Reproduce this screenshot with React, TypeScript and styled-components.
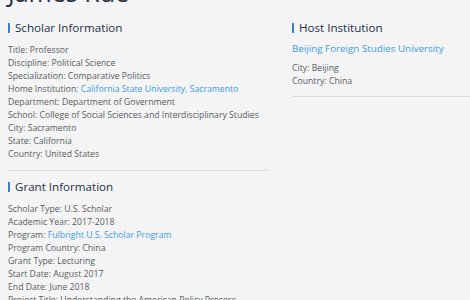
import React from "react";
import styled, { createGlobalStyle } from "styled-components";

const Global = createGlobalStyle`
  html, body { margin: 0; padding: 0; background: #f4f4f4; }
  body { font-family: "Open Sans", "Noto Sans", sans-serif; }
`;

const Page = styled.div`
  padding: 0 8px;
  overflow: hidden;
  height: 300px;
`;

const Name = styled.h1`
  margin: -23px 0 0 0;
  font-size: 25px;
  line-height: 30px;
  font-weight: 500;
  color: #243044;
`;

const Columns = styled.div`
  display: grid;
  grid-template-columns: 262px 200px;
  column-gap: 22px;
  margin-top: 13px;
`;

const Column = styled.div`
  display: flex;
  flex-direction: column;
`;

const Section = styled.section<{ $divider?: boolean; $pad?: number }>`
  padding-bottom: ${(p) => p.$pad ?? 9}px;
  border-bottom: ${(p) => (p.$divider ? "1px solid #dcdcdc" : "none")};
  margin-bottom: 8px;
`;

const Heading = styled.h2`
  display: flex;
  align-items: center;
  gap: 5px;
  margin: 0 0 8px 0;
  font-size: 11.6px;
  line-height: 16px;
  font-weight: 500;
  color: #243044;
  &::before {
    content: "";
    width: 2px;
    height: 10px;
    background: #3a7fd6;
  }
`;

const Row = styled.div`
  font-size: 8.7px;
  line-height: 13px;
  color: #585c61;
`;

const Link = styled.a`
  color: #3d9be0;
  text-decoration: none;
`;

const HostName = styled(Link)`
  display: block;
  font-size: 9.8px;
  line-height: 14px;
  margin: -2px 0 6px;
`;

type Item = [string, string, boolean?];

const scholar: Item[] = [
  ["Title", "Professor"],
  ["Discipline", "Political Science"],
  ["Specialization", "Comparative Politics"],
  ["Home Institution", "California State University, Sacramento", true],
  ["Department", "Department of Government"],
  ["School", "College of Social Sciences and Interdisciplinary Studies"],
  ["City", "Sacramento"],
  ["State", "California"],
  ["Country", "United States"],
];

const grant: Item[] = [
  ["Scholar Type", "U.S. Scholar"],
  ["Academic Year", "2017-2018"],
  ["Program", "Fulbright U.S. Scholar Program", true],
  ["Program Country", "China"],
  ["Grant Type", "Lecturing"],
  ["Start Date", "August 2017"],
  ["End Date", "June 2018"],
  ["Project Title", "Understanding the American Policy Process"],
];

const host: Item[] = [
  ["City", "Beijing"],
  ["Country", "China"],
];

function Rows({ items }: { items: Item[] }) {
  return (
    <>
      {items.map(([k, v, link]) => (
        <Row key={k}>
          {k}: {link ? <Link href="#">{v}</Link> : v}
        </Row>
      ))}
    </>
  );
}

export default function App() {
  return (
    <>
      <Global />
      <Page>
        <Name>James Rue</Name>
        <Columns>
          <Column>
            <Section $divider>
              <Heading>Scholar Information</Heading>
              <Rows items={scholar} />
            </Section>
            <Section>
              <Heading>Grant Information</Heading>
              <Rows items={grant} />
            </Section>
          </Column>
          <Column>
            <Section $divider $pad={8}>
              <Heading>Host Institution</Heading>
              <HostName href="#">Beijing Foreign Studies University</HostName>
              <Rows items={host} />
            </Section>
          </Column>
        </Columns>
      </Page>
    </>
  );
}
